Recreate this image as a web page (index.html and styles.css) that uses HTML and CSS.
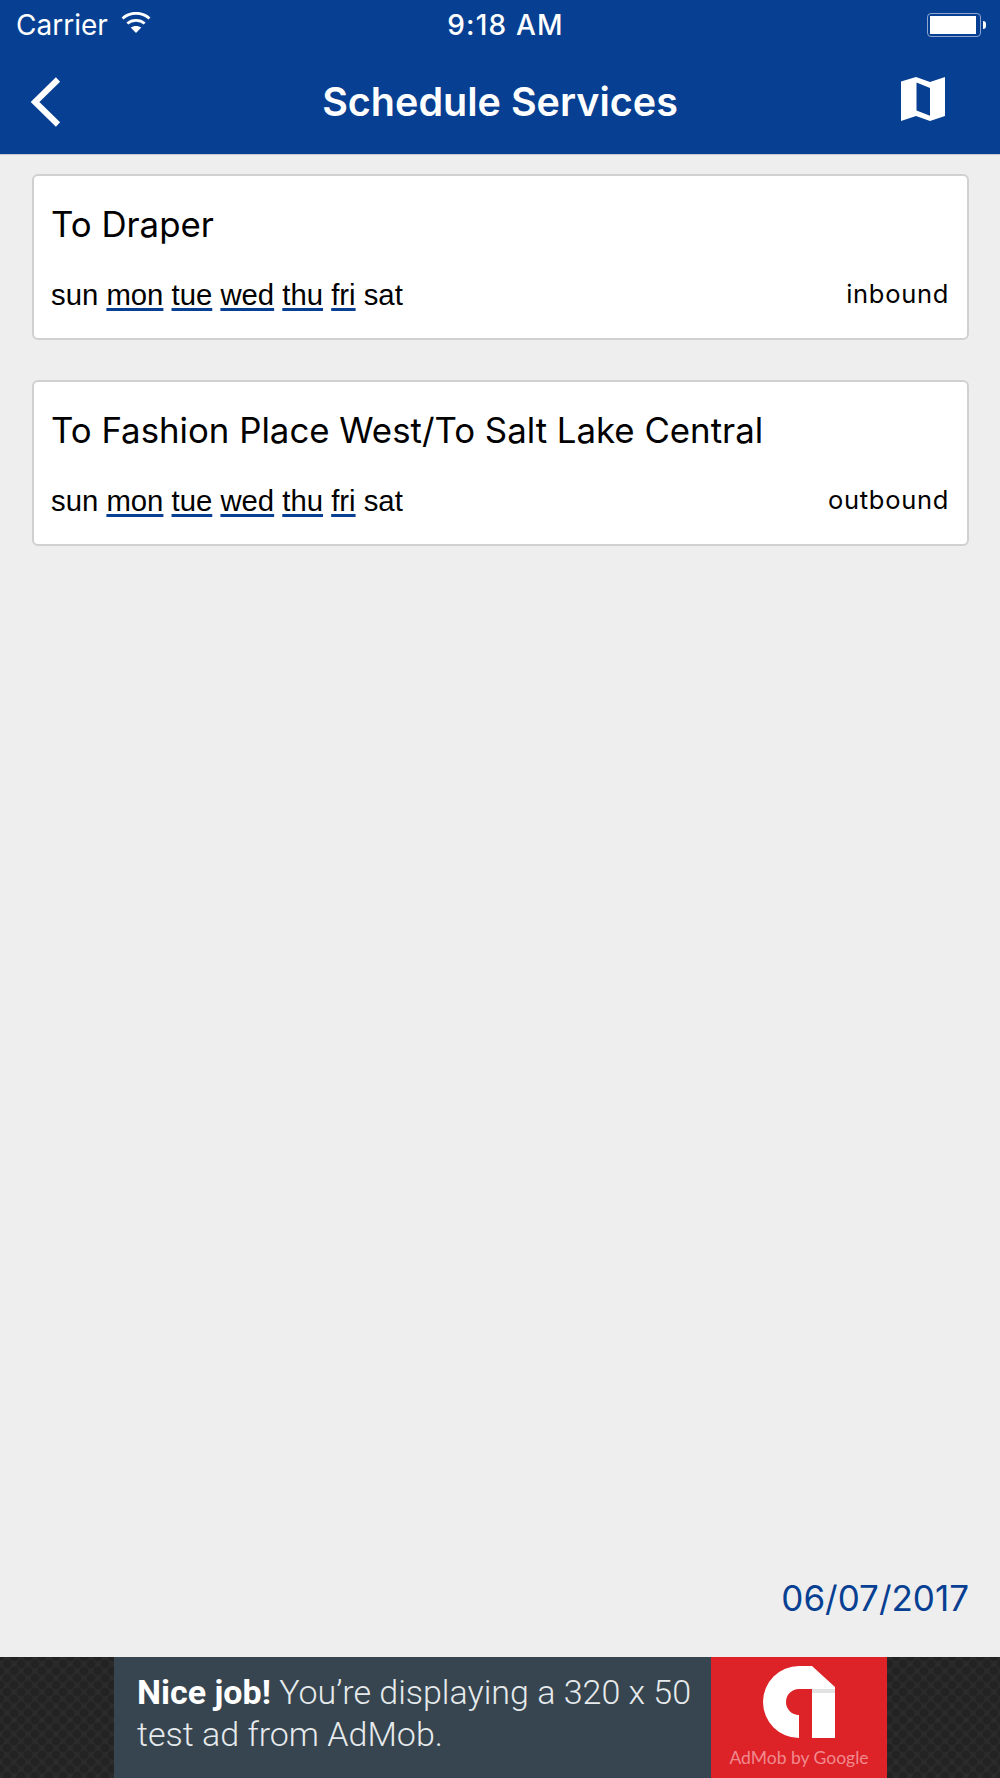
FILE: index.html
```html
<!DOCTYPE html>
<html lang="en">
<head>
  <meta charset="UTF-8" />
  <meta name="viewport" content="width=device-width, initial-scale=1.0"/>
  <title>Schedule Services</title>
  <link rel="stylesheet" href="styles.css">
</head>
<body>
  <header class="top">
    <div class="status">
      <div class="status-left">
        <span>Carrier</span>
        <svg class="wifi" width="30" height="21" viewBox="0 0 30 21">
          <path d="M15 21L9.700 15.600C12.700 13.300 17.300 13.300 20.300 15.600z" fill="#fff"/>
          <path d="M6.300 11.500C11.300 7.300 18.700 7.300 23.700 11.500" fill="none" stroke="#fff" stroke-width="2.800"/>
          <path d="M1.500 6.500C9 -.5 21 -.5 28.500 6.500" fill="none" stroke="#fff" stroke-width="2.800"/>
        </svg>
      </div>
      <div class="status-time">9:18 AM</div>
      <div class="battery"><span class="battery-fill"></span></div>
    </div>
    <nav class="bar">
      <svg class="back" width="32" height="52" viewBox="0 0 32 52">
        <path d="M29 3.500L6 26l23 22.500" fill="none" stroke="#fff" stroke-width="6"/>
      </svg>
      <h1>Schedule Services</h1>
      <svg class="map" width="44" height="44" viewBox="0 0 44 44">
        <path d="M0 4.500L15 0 29 5 44 0V39L29 44 15 39 0 44z M15.500 5.500V33.500L29 38.700V11z" fill="#fff" fill-rule="evenodd"/>
      </svg>
    </nav>
  </header>

  <main class="content">
    <section class="card">
      <h2>To Draper</h2>
      <div class="card-foot">
        <div class="days">sun <u>mon</u> <u>tue</u> <u>wed</u> <u>thu</u> <u>fri</u> sat</div>
        <div class="direction">inbound</div>
      </div>
    </section>
    <section class="card">
      <h2>To Fashion Place West/To Salt Lake Central</h2>
      <div class="card-foot">
        <div class="days">sun <u>mon</u> <u>tue</u> <u>wed</u> <u>thu</u> <u>fri</u> sat</div>
        <div class="direction">outbound</div>
      </div>
    </section>
    <div class="date">06/07/2017</div>
  </main>

  <footer class="ad-strip">
    <div class="ad">
      <p class="ad-text"><b>Nice job!</b> You’re displaying a 320 x 50 test ad from AdMob.</p>
      <div class="ad-brand">
        <svg width="72" height="72" viewBox="0 0 72 72">
          <path d="M36 0H49L72 21V72H49V23H36A13 13 0 0 0 36 49V72A36 36 0 0 1 36 0z" fill="#fff"/>
          <rect x="49" y="23" width="23" height="4" fill="#e2e2e2"/>
        </svg>
        <span>AdMob by Google</span>
      </div>
    </div>
  </footer>
</body>
</html>
```

FILE: styles.css
```css
* {
  box-sizing: border-box;
}

body {
  display: flex;
  flex-direction: column;
  height: 1778px;
  margin: 0;
  font-family: Inter, 'Liberation Sans', sans-serif;
  background: #eeeeee;
  color: #000000;
}

.top {
  height: 155px;
  background: #073f92;
  border-bottom: 1px solid #c4c8d0;
  color: #ffffff;
}

.status {
  display: grid;
  grid-template-columns: 1fr auto 1fr;
  align-items: center;
  height: 50px;
  padding: 0 14px 0 16px;
  font-size: 28px;
}

.status-left {
  display: flex;
  align-items: center;
  gap: 13px;
}

.wifi {
  margin-top: -5px;
}

.status-time {
  margin-left: 9px;
  font-weight: 500;
  letter-spacing: 1.2px;
}

.battery {
  position: relative;
  justify-self: end;
  width: 54px;
  height: 24px;
  padding: 2px;
  border: 1px solid #8ea6cf;
  border-radius: 4px;
  margin-right: 5px;
}

.battery::after {
  content: "";
  position: absolute;
  right: -6px;
  top: 7px;
  width: 3px;
  height: 8px;
  background: #ffffff;
  border-radius: 0 3px 3px 0;
}

.battery-fill {
  display: block;
  width: 46px;
  height: 100%;
  background: #ffffff;
}

.bar {
  display: grid;
  grid-template-columns: 1fr auto 1fr;
  align-items: center;
  height: 104px;
  padding: 0 55px;
}

.back {
  margin-left: -26px;
}

.bar h1 {
  margin: 0;
  font-size: 39.5px;
  font-weight: 600;
}

.map {
  justify-self: end;
  margin-bottom: 6px;
}

.content {
  display: flex;
  flex: 1;
  flex-direction: column;
  gap: 40px;
  padding: 19px 31px 0 32px;
}

.card {
  height: 166px;
  padding: 27px 18px 0 17px;
  background: #ffffff;
  border: 2px solid #d0d0d0;
  border-radius: 6px;
}

.card h2 {
  margin: 0;
  font-size: 34.800px;
  font-weight: 400;
  line-height: 42px;
}

.card-foot {
  display: flex;
  justify-content: space-between;
  align-items: flex-start;
  margin-top: 32px;
}

.days {
  font-family: 'Liberation Sans', sans-serif;
  font-size: 29.300px;
  line-height: 36px;
}

.days u {
  text-decoration: underline #073f92 3px;
  text-decoration-skip-ink: none;
  text-underline-offset: 3px;
}

.direction {
  font-size: 25.500px;
  line-height: 34px;
  letter-spacing: 0.7px;
}

.date {
  margin-top: auto;
  margin-bottom: 38px;
  text-align: right;
  font-size: 35px;
  color: #073f92;
}

.ad-strip {
  display: flex;
  justify-content: center;
  height: 121px;
  background-color: #2b2b2b;
  background-image:
    radial-gradient(circle, #232323 40%, transparent 50%),
    radial-gradient(circle, #232323 40%, transparent 50%);
  background-size: 14px 14px;
  background-position: 0 0, 7px 7px;
}

.ad {
  display: flex;
  width: 773px;
  margin-right: -1px;
  background: #36454f;
}

.ad-text {
  flex: 1;
  margin: 0;
  padding: 14px 10px 0 23px;
  font-family: Roboto, 'Liberation Sans', sans-serif;
  font-size: 34px;
  font-weight: 300;
  line-height: 42px;
  color: #e6eaec;
}

.ad-text b {
  font-weight: 700;
  color: #ffffff;
}

.ad-brand {
  display: flex;
  flex-direction: column;
  align-items: center;
  width: 176px;
  padding-top: 9px;
  background: #dd2228;
  color: #f08a8e;
  font-family: Lato, sans-serif;
  font-size: 17.500px;
}

.ad-brand svg {
  margin-bottom: 9px;
}
```
